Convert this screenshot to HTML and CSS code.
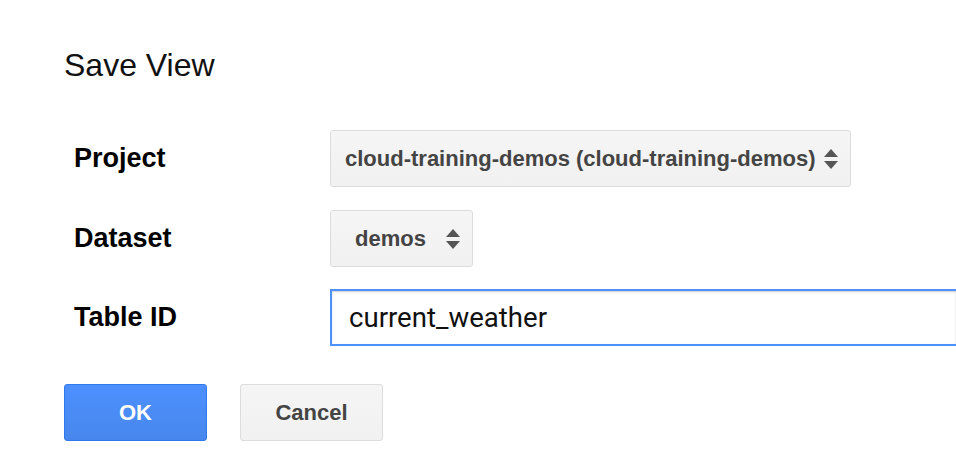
FILE: index.html
```html
<!DOCTYPE html>
<html>
<head>
<meta charset="utf-8">
<link rel="stylesheet" href="styles.css">
</head>
<body>
<div class="dialog">
  <h1 class="title">Save View</h1>
  <div class="form">
    <div class="label">Project</div>
    <div class="field">
      <div class="select select-project">
        <span class="select-text">cloud-training-demos (cloud-training-demos)</span>
        <span class="arrows"><span class="up"></span><span class="down"></span></span>
      </div>
    </div>
    <div class="label">Dataset</div>
    <div class="field">
      <div class="select select-dataset">
        <span class="select-text">demos</span>
        <span class="arrows"><span class="up"></span><span class="down"></span></span>
      </div>
    </div>
    <div class="label label-last">Table ID</div>
    <div class="field">
      <div class="input">current_weather</div>
    </div>
  </div>
  <div class="buttons">
    <button class="btn btn-ok">OK</button>
    <button class="btn btn-cancel">Cancel</button>
  </div>
</div>
</body>
</html>
```
FILE: styles.css
```css
html, body {
  margin: 0;
  padding: 0;
  background: #fff;
  overflow: hidden;
}
body {
  width: 956px;
  height: 462px;
  font-family: "Liberation Sans", Arial, sans-serif;
}
.dialog {
  padding: 46px 0 0 64px;
}
.title {
  margin: 0;
  font-size: 32px;
  font-weight: normal;
  color: #111;
  line-height: 38px;
}
.form {
  margin-top: 46px;
  display: grid;
  grid-template-columns: 266px 626px;
  grid-template-rows: 57px 57px 56px;
  row-gap: 23px;
  align-items: center;
  overflow: hidden;
}
.label-last {
  margin-top: -2px;
}
.label {
  padding-left: 10px;
  font-size: 27px;
  font-weight: bold;
  color: #000;
}
.field {
  display: flex;
}
.select {
  box-sizing: border-box;
  height: 57px;
  display: flex;
  align-items: center;
  border: 1px solid #dcdcdc;
  border-radius: 3px;
  background: linear-gradient(#f5f5f5, #f1f1f1);
  color: #444;
  font-size: 22px;
  font-weight: bold;
}
.select-project {
  width: 521px;
  padding-left: 14px;
}
.select-dataset {
  width: 143px;
  padding-left: 24px;
}
.select-text {
  flex: 1;
}
.arrows {
  display: flex;
  flex-direction: column;
  gap: 4px;
  margin-right: 12px;
}
.up {
  width: 0;
  height: 0;
  border-left: 7px solid transparent;
  border-right: 7px solid transparent;
  border-bottom: 8px solid #555;
}
.down {
  width: 0;
  height: 0;
  border-left: 7px solid transparent;
  border-right: 7px solid transparent;
  border-top: 8px solid #555;
}
.input {
  box-sizing: border-box;
  width: 626px;
  height: 57px;
  margin-top: -2px;
  border: 2px solid #4d90fe;
  border-right: none;
  box-shadow: inset 0 1px 2px rgba(0,0,0,0.2);
  padding-left: 17px;
  display: flex;
  align-items: center;
  font-family: Roboto, "Liberation Sans", sans-serif;
  font-size: 27.6px;
  color: #111;
}
.buttons {
  margin-top: 38px;
  display: flex;
  gap: 33px;
}
.btn {
  box-sizing: border-box;
  width: 143px;
  height: 57px;
  border-radius: 3px;
  font-family: "Liberation Sans", Arial, sans-serif;
  font-size: 22px;
  font-weight: bold;
  padding: 0;
}
.btn-ok {
  background: linear-gradient(#4d90fe, #4787ed);
  border: 1px solid #3079ed;
  color: #fff;
}
.btn-cancel {
  background: linear-gradient(#f5f5f5, #f1f1f1);
  border: 1px solid #dcdcdc;
  color: #444;
}
```
